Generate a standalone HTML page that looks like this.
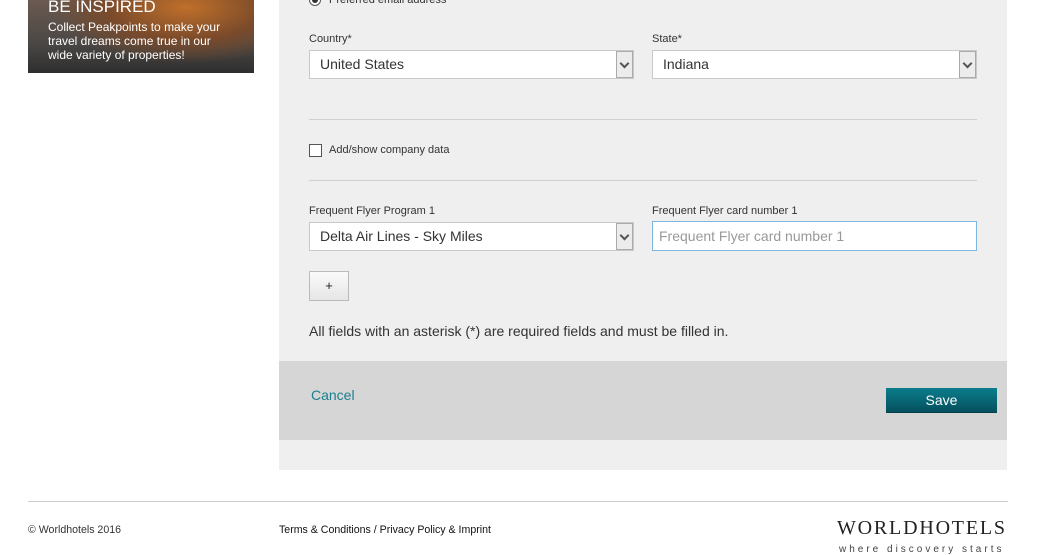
<!DOCTYPE html>
<html><head><meta charset="utf-8"><style>
*{margin:0;padding:0;box-sizing:border-box}
body{width:1037px;height:552px;overflow:hidden;background:#fff;font-family:"Liberation Sans",Arial,sans-serif;position:relative;color:#222}
.abs{position:absolute}
.img{left:28px;top:0;width:226px;height:73px;background:radial-gradient(ellipse at 70% 10%,#c0702a 0%,#7a4a2a 35%,transparent 60%),linear-gradient(180deg,#6b5a50,#4a4745 60%,#2e2e2e);color:#fff}
.panel{left:279px;top:0;width:728px;height:470px;background:#efefef}
.lbl{font-size:11px;color:#333}
.sel{height:29px;background:#fff;border:1px solid #c9c9c9;font-size:14px;color:#333;padding:5px 10px}
.arr{position:absolute;right:0;top:0;width:17px;height:27px;background:#ececec;border:1px solid #aaa}
.arr:after{content:"";position:absolute;left:4px;top:8px;width:5px;height:5px;border-right:2px solid #555;border-bottom:2px solid #555;transform:rotate(45deg)}
.hr{height:1px;background:#d0d0d0}
</style></head><body>
<div class="abs img">
<div class="abs" style="left:20px;top:-3px;font-size:17px">BE INSPIRED</div>
<div class="abs" style="left:20px;top:20px;font-size:12px;line-height:14px;width:185px">Collect Peakpoints to make your travel dreams come true in our wide variety of properties!</div>
</div>
<div class="abs panel"></div>
<div class="abs" style="left:309px;top:-6px;width:12px;height:12px;border:1px solid #555;border-radius:50%;background:#fff"><div style="margin:2px;width:6px;height:6px;border-radius:50%;background:#333"></div></div>
<div class="abs lbl" style="left:329px;top:-6px">Preferred email address</div>
<div class="abs lbl" style="left:309px;top:33px">Country*</div>
<div class="abs lbl" style="left:652px;top:33px">State*</div>
<div class="abs sel" style="left:309px;top:50px;width:325px">United States<div class="arr"></div></div>
<div class="abs sel" style="left:652px;top:50px;width:325px">Indiana<div class="arr"></div></div>
<div class="abs hr" style="left:309px;top:119px;width:668px"></div>
<div class="abs" style="left:309px;top:144px;width:13px;height:13px;border:1px solid #555;background:#fff"></div>
<div class="abs lbl" style="left:329px;top:144px">Add/show company data</div>
<div class="abs hr" style="left:309px;top:180px;width:668px"></div>
<div class="abs lbl" style="left:309px;top:205px">Frequent Flyer Program 1</div>
<div class="abs lbl" style="left:652px;top:205px">Frequent Flyer card number 1</div>
<div class="abs sel" style="left:309px;top:222px;width:325px">Delta Air Lines - Sky Miles<div class="arr"></div></div>
<div class="abs sel" style="left:652px;top:221px;width:325px;height:30px;border:1px solid #7fb6e0;color:#999;padding:6px 6px">Frequent Flyer card number 1</div>
<div class="abs" style="left:309px;top:271px;width:40px;height:30px;border:1px solid #bbb;background:linear-gradient(#fafafa,#e6e6e6);text-align:center;line-height:28px;font-size:13px">+</div>
<div class="abs" style="left:309px;top:323px;font-size:14px;color:#333">All fields with an asterisk (*) are required fields and must be filled in.</div>
<div class="abs" style="left:279px;top:361px;width:728px;height:79px;background:#d6d6d6"></div>
<div class="abs" style="left:311px;top:387px;font-size:14px;color:#1a7f8f">Cancel</div>
<div class="abs" style="left:886px;top:388px;width:111px;height:25px;background:linear-gradient(#0b7d8c,#05505d);color:#fff;font-size:14px;text-align:center;line-height:25px;border-bottom:1px solid #04404a">Save</div>
<div class="abs hr" style="left:28px;top:501px;width:980px;background:#ccc"></div>
<div class="abs" style="left:28px;top:524px;font-size:10.6px;color:#333">© Worldhotels 2016</div>
<div class="abs" style="left:279px;top:524px;font-size:10.6px;color:#111">Terms &amp; Conditions / Privacy Policy &amp; Imprint</div>
<div class="abs" style="left:837px;top:517px;font-family:'Liberation Serif',serif;font-size:20px;letter-spacing:1.8px;color:#222">WORLDHOTELS</div>
<div class="abs" style="left:839px;top:544px;font-size:10px;letter-spacing:3px;color:#444">where discovery starts</div>
</body></html>
